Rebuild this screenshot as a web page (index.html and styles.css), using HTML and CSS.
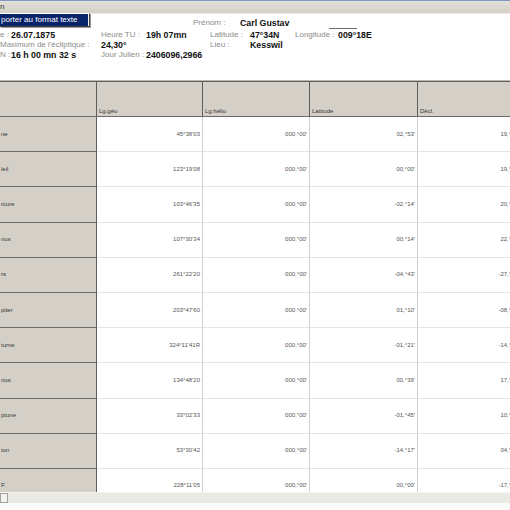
FILE: index.html
```html
<!DOCTYPE html>
<html lang="fr">
<head>
<meta charset="utf-8">
<title>Thème</title>
<link rel="stylesheet" href="styles.css">
</head>
<body>
<div class="topline"></div>
<div class="menubar">
  <span class="menu-item">n</span>
  <div class="dropdown"><div class="dd-item">porter au format texte</div></div>
</div>
<div class="info">
  <div class="row1">
    <span class="lbl w47">Prénom :</span><span class="val">Carl Gustav</span><span class="rule"></span>
  </div>
  <div class="rows">
    <div class="c"><span class="lbl w11">e :</span><span class="val">26.07.1875</span></div>
    <div class="c"><span class="lbl w45">Heure TU :</span><span class="val">19h 07mn</span></div>
    <div class="c"><span class="lbl w40">Latitude :</span><span class="val">47°34N</span></div>
    <div class="c"><span class="lbl w43">Longitude :</span><span class="val">009°18E</span></div>

    <div class="c"><span class="lbl">Maximum de l'écliptique :</span></div>
    <div class="c"><span class="val">24,30°</span></div>
    <div class="c"><span class="lbl w40">Lieu :</span><span class="val">Kesswil</span></div>
    <div class="c"></div>

    <div class="c"><span class="lbl w11">N :</span><span class="val">16 h 00 mn 32 s</span></div>
    <div class="c"><span class="lbl w45">Jour Julien :</span><span class="val">2406096,2966</span></div>
    <div class="c"></div>
    <div class="c"></div>
  </div>
</div>
<div class="grid-wrap">
  <div class="tbl">
    <div class="h first"></div><div class="h">Lg.géo</div><div class="h">Lg.hélio</div><div class="h">Latitude</div><div class="h">Décl.</div>

    <div class="rl">ne</div><div class="d">45°38'03</div><div class="d">000,°00'</div><div class="d">02,°53'</div><div class="d">19,°48'</div>
    <div class="rl">leil</div><div class="d">123°19'08</div><div class="d">000,°00'</div><div class="d">00,°00'</div><div class="d">19,°24'</div>
    <div class="rl">rcure</div><div class="d">103°46'35</div><div class="d">000,°00'</div><div class="d">-02,°14'</div><div class="d">20,°12'</div>
    <div class="rl">nus</div><div class="d">107°30'34</div><div class="d">000,°00'</div><div class="d">00,°14'</div><div class="d">22,°41'</div>
    <div class="rl">rs</div><div class="d">261°22'20</div><div class="d">000,°00'</div><div class="d">-04,°43'</div><div class="d">-27,°03'</div>
    <div class="rl">piter</div><div class="d">203°47'60</div><div class="d">000,°00'</div><div class="d">01,°10'</div><div class="d">-08,°35'</div>
    <div class="rl">turne</div><div class="d">324°11'41R</div><div class="d">000,°00'</div><div class="d">-01,°21'</div><div class="d">-14,°52'</div>
    <div class="rl">nus</div><div class="d">134°48'20</div><div class="d">000,°00'</div><div class="d">00,°39'</div><div class="d">17,°29'</div>
    <div class="rl">ptune</div><div class="d">33°02'33</div><div class="d">000,°00'</div><div class="d">-01,°45'</div><div class="d">10,°15'</div>
    <div class="rl">ton</div><div class="d">53°30'42</div><div class="d">000,°00'</div><div class="d">-14,°17'</div><div class="d">04,°36'</div>
    <div class="rl">F</div><div class="d">228°11'05</div><div class="d">000,°00'</div><div class="d">00,°00'</div><div class="d">-17,°50'</div>
  </div>
</div>
<div class="hscroll"><div class="thumb"></div></div>
<div class="bottom"></div>
</body>
</html>
```

FILE: styles.css
```css
* { box-sizing: border-box; }
html, body { margin: 0; padding: 0; background: #ffffff; }
body {
  width: 510px;
  height: 510px;
  overflow: hidden;
  font-family: "Liberation Sans", Arial, sans-serif;
  color: #000;
}
.topline { height: 1px; background: #7f98bd; }
.menubar {
  position: relative;
  height: 13px;
  background: linear-gradient(#e2dfd8, #d5d1c9);
  border-bottom: 1px solid #ecebe6;
  font-size: 8px;
  line-height: 12px;
  color: #333;
}
.menu-item { padding-left: 0; }
.dropdown {
  position: absolute;
  top: 12px;
  left: 0;
  width: 90px;
  background: #f2f1ec;
  border-top: 1px solid #ffffff;
  border-right: 1px solid #404040;
  border-bottom: 1px solid #404040;
  padding: 0 1px 0 0;
  box-shadow: 1px 1px 0 #9a9a9a;
}
.dd-item {
  height: 12px;
  background: #0a246a;
  color: #fff;
  font-size: 8px;
  line-height: 12px;
  padding-left: 1px;
  white-space: nowrap;
}
.info { padding-top: 1px; height: 66px; }
.row1 {
  display: flex;
  align-items: center;
  height: 15px;
  padding-left: 193px;
  position: relative;
}
.rule {
  width: 28px;
  height: 0;
  border-top: 1px solid #6e6e6e;
  margin-left: 40px;
  align-self: flex-end;
  margin-bottom: 1px;
}
.rows {
  display: grid;
  grid-template-columns: 101px 109px 85px 1fr;
  grid-auto-rows: 10px;
}
.c {
  display: flex;
  align-items: center;
  white-space: nowrap;
  line-height: 10px;
}
.lbl { font-size: 8px; color: #8a8a8a; display: inline-block; }
.val { font-size: 8.8px; font-weight: bold; color: #111; }
.w11 { width: 11px; }
.w40 { width: 40px; }
.w43 { width: 43px; }
.w45 { width: 45px; }
.w47 { width: 47px; }
.grid-wrap {
  height: 412px;
  overflow: hidden;
  border-top: 1px solid #bdbab4;
}
.tbl {
  display: grid;
  width: 522px;
  grid-template-columns: 97px 106px 107px 108px 104px;
  grid-template-rows: 36px;
  grid-auto-rows: 35.2px;
  font-size: 6px;
  line-height: 7px;
  color: #555;
}
.h {
  background: #d4d0c8;
  border-top: 1px solid #5e5e5e;
  border-bottom: 1px solid #6a6a6a;
  border-right: 1px solid #5e5e5e;
  display: flex;
  align-items: flex-end;
  padding: 0 0 1px 2px;
  color: #333;
  white-space: nowrap;
}
.rl {
  background: #d4d0c8;
  border-right: 1px solid #5e5e5e;
  border-bottom: 1px solid #6a6a6a;
  display: flex;
  align-items: center;
  padding-left: 1px;
  color: #333;
}
.d {
  border-right: 1px solid #cfcfcf;
  border-bottom: 1px solid #e4e4e4;
  display: flex;
  align-items: center;
  justify-content: flex-end;
  padding-right: 2px;
  white-space: nowrap;
}
.hscroll {
  height: 11px;
  background: #ebe9e4;
  border-top: 1px solid #f5f4f0;
}
.thumb {
  width: 8px;
  height: 10px;
  background: #f3f2ee;
  border: 1px solid #a3a19b;
}
.bottom { height: 7px; background: #fbfbf9; }
```
